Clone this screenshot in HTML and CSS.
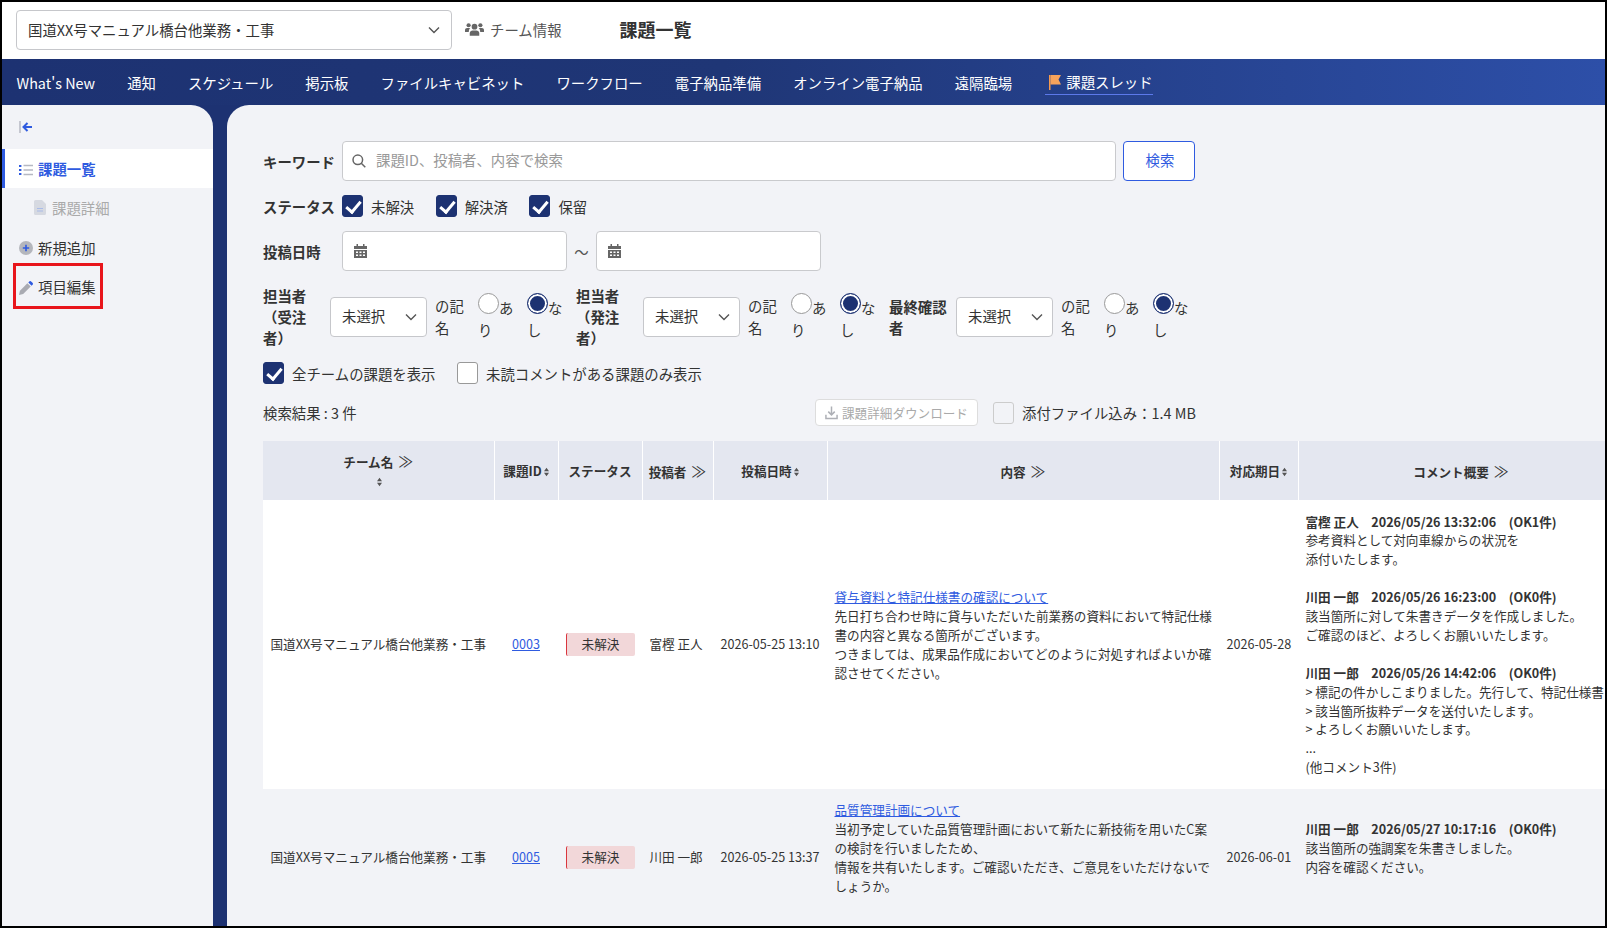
FILE: index.html
```html
<!DOCTYPE html>
<html lang="ja">
    <head>
        <meta charset="utf-8">
        <title>課題一覧</title>
        <link rel="stylesheet" href="styles.css">
    </head>
    <body>
        <div class="frame">
            <header class="top">
                <div class="select project-select">
                    <span>国道XX号マニュアル橋台他業務・工事</span>
                    <svg class="chevron" viewBox="0 0 12 8"><path d="M1 1.5l5 5 5-5"/></svg>
                </div>
                <a class="team-link">
                    <svg class="team-icon" viewBox="0 0 20 15"><circle cx="10" cy="4.5" r="3"/><circle cx="3.8" cy="3" r="2.2"/><circle cx="16.2" cy="3" r="2.2"/><path d="M5 14v-2.5C5 9.500 6.500 8.500 8 8.500h4c1.500 0 3 1 3 3V14z"/><path d="M0 10V8c0-1.500 1-2.200 2.200-2.200h3.300C4.500 6.800 4 8 4 10zM20 10V8c0-1.500-1-2.200-2.200-2.200h-3.300c1 1 1.500 2.200 1.500 4.200z"/></svg>
                    チーム情報
                </a>
                <h1 class="page-title">課題一覧</h1>
            </header>

            <nav class="nav">
                <a>What's New</a>
                <a>通知</a>
                <a>スケジュール</a>
                <a>掲示板</a>
                <a>ファイルキャビネット</a>
                <a>ワークフロー</a>
                <a>電子納品準備</a>
                <a>オンライン電子納品</a>
                <a>遠隔臨場</a>
                <a class="nav-active">
                    <svg class="flag" viewBox="0 0 12 15"><path d="M0 0h1.500v15H0z" fill="#f59a4f"/><path d="M1.500 0H12L9.500 4.500 12 9.500H1.500z" fill="#f7a35c"/></svg>
                    課題スレッド
                </a>
            </nav>

            <div class="body-wrap">
                <aside class="side">
                    <div class="collapse">
                        <svg viewBox="0 0 14 12" width="14" height="12"><path d="M1 0v12" stroke="#b9bcc6" stroke-width="1.600" fill="none"/><path d="M13 6H5M8.500 2L4.500 6l4 4" stroke="#2f5be0" stroke-width="2" fill="none"/></svg>
                    </div>
                    <a class="side-item active">
                        <svg class="side-icon" viewBox="0 0 14 12"><path d="M0 1h2.400v2H0zM0 5h2.400v2H0zM0 9h2.400v2H0z" fill="#2f5be0"/><path d="M4.500 1.500H14M4.500 6H14M4.500 10.500H14" stroke="#b5b8c2" stroke-width="1.300"/></svg>
                        課題一覧
                    </a>
                    <a class="side-item sub">
                        <svg class="doc-icon" viewBox="0 0 12 15"><path d="M1.500 0H8l4 4v9.500a1.500 1.500 0 0 1-1.500 1.500h-9A1.500 1.500 0 0 1 0 13.500v-12A1.500 1.500 0 0 1 1.500 0z" fill="#d6d9e1"/><path d="M3 8.500h6M3 11h6" stroke="#a9bbe8" stroke-width="1.200"/></svg>
                        課題詳細
                    </a>
                    <a class="side-item">
                        <svg class="side-icon" viewBox="0 0 14 14"><circle cx="7" cy="7" r="7" fill="#b4b6bc"/><path d="M7 3.800v6.400M3.800 7h6.400" stroke="#2f5be0" stroke-width="1.600"/></svg>
                        新規追加
                    </a>
                    <a class="side-item">
                        <svg class="side-icon" viewBox="0 0 15 15"><path d="M0 15l1-4.500L9 2.500l3.500 3.500-8 8z" fill="#a9abb2"/><path d="M10 1.500l1-1a1.400 1.400 0 0 1 2 0l1.500 1.500a1.400 1.400 0 0 1 0 2l-1 1z" fill="#2f5be0"/></svg>
                        項目編集
                        <span class="annot"></span>
                    </a>
                </aside>

                <main class="main">
                    <div class="row">
                        <label class="lbl">キーワード</label>
                        <div class="field keyword">
                            <svg class="search-icon" viewBox="0 0 14 14"><circle cx="5.800" cy="5.800" r="4.800"/><path d="M9.300 9.300l4 4"/></svg>
                            <input type="text" placeholder="課題ID、投稿者、内容で検索">
                        </div>
                        <button class="search-btn" type="button">検索</button>
                    </div>

                    <div class="row status-row">
                        <label class="lbl">ステータス</label>
                        <label class="chk"><input type="checkbox" checked>未解決</label>
                        <label class="chk"><input type="checkbox" checked>解決済</label>
                        <label class="chk"><input type="checkbox" checked>保留</label>
                    </div>

                    <div class="row date-row">
                        <label class="lbl">投稿日時</label>
                        <div class="field date">
                            <svg class="cal" viewBox="0 0 13 14"><path d="M2.500 0h1.500v2H9V0h1.500v2H13v3H0V2h2.500z"/><path d="M0 6h13v8H0zM2 7.500v1.500h2V7.500zM5.500 7.500v1.500h2V7.500zM9 7.500v1.500h2V7.500zM2 10.500V12h2v-1.500zM5.500 10.500V12h2v-1.500zM9 10.500V12h2v-1.500z" fill-rule="evenodd"/></svg>
                        </div>
                        <span class="tilde">〜</span>
                        <div class="field date">
                            <svg class="cal" viewBox="0 0 13 14"><path d="M2.500 0h1.500v2H9V0h1.500v2H13v3H0V2h2.500z"/><path d="M0 6h13v8H0zM2 7.500v1.500h2V7.500zM5.500 7.500v1.500h2V7.500zM9 7.500v1.500h2V7.500zM2 10.500V12h2v-1.500zM5.500 10.500V12h2v-1.500zM9 10.500V12h2v-1.500z" fill-rule="evenodd"/></svg>
                        </div>
                    </div>

                    <div class="row assign-row">
                        <div class="assign">
                            <label class="lbl assign-lbl"><span>担当者（受注者）</span></label>
                            <div class="select small-select"><span>未選択</span><svg class="chevron" viewBox="0 0 12 8"><path d="M1 1.500l5 5 5-5"/></svg></div>
                            <span class="sign">の記名</span>
                            <label class="rad"><input type="radio" name="a1">あり</label>
                            <label class="rad"><input type="radio" name="a1" checked>なし</label>
                        </div>
                        <div class="assign">
                            <label class="lbl assign-lbl"><span>担当者（発注者）</span></label>
                            <div class="select small-select"><span>未選択</span><svg class="chevron" viewBox="0 0 12 8"><path d="M1 1.500l5 5 5-5"/></svg></div>
                            <span class="sign">の記名</span>
                            <label class="rad"><input type="radio" name="a2">あり</label>
                            <label class="rad"><input type="radio" name="a2" checked>なし</label>
                        </div>
                        <div class="assign">
                            <label class="lbl assign-lbl wide"><span>最終確認者</span></label>
                            <div class="select small-select"><span>未選択</span><svg class="chevron" viewBox="0 0 12 8"><path d="M1 1.500l5 5 5-5"/></svg></div>
                            <span class="sign">の記名</span>
                            <label class="rad"><input type="radio" name="a3">あり</label>
                            <label class="rad"><input type="radio" name="a3" checked>なし</label>
                        </div>
                    </div>

                    <div class="row option-row">
                        <label class="chk"><input type="checkbox" checked>全チームの課題を表示</label>
                        <label class="chk"><input type="checkbox">未読コメントがある課題のみ表示</label>
                    </div>

                    <div class="row result-row">
                        <span class="count">検索結果 : 3 件</span>
                        <button class="dl-btn" type="button">
                            <svg viewBox="0 0 14 14" width="13" height="14"><path d="M7 0v8.500M3.500 5.500L7 9l3.500-3.500M1 9v4h12V9" stroke="#aeb0b6" stroke-width="1.600" fill="none"/></svg>
                            課題詳細ダウンロード
                        </button>
                        <label class="chk attach"><input type="checkbox" disabled>添付ファイル込み：1.4 MB</label>
                    </div>

                    <div class="table-wrap">
                        <table class="issues">
                            <thead>
                                <tr>
                                    <th class="c-team">チーム名 <span class="more">≫</span><br><svg class="sort" viewBox="0 0 6 10"><path d="M3 0l3 4H0zM3 10L0 6h6z"/></svg></th>
                                    <th class="c-id">課題ID<svg class="sort" viewBox="0 0 6 10"><path d="M3 0l3 4H0zM3 10L0 6h6z"/></svg></th>
                                    <th class="c-status">ステータス</th>
                                    <th class="c-user">投稿者 <span class="more">≫</span></th>
                                    <th class="c-date">投稿日時<svg class="sort" viewBox="0 0 6 10"><path d="M3 0l3 4H0zM3 10L0 6h6z"/></svg></th>
                                    <th class="c-body">内容 <span class="more">≫</span></th>
                                    <th class="c-due">対応期日<svg class="sort" viewBox="0 0 6 10"><path d="M3 0l3 4H0zM3 10L0 6h6z"/></svg></th>
                                    <th class="c-comment">コメント概要 <span class="more">≫</span></th>
                                </tr>
                            </thead>
                            <tbody>
                                <tr>
                                    <td>国道XX号マニュアル橋台他業務・工事</td>
                                    <td class="center"><a href="#">0003</a></td>
                                    <td class="center"><span class="badge">未解決</span></td>
                                    <td>富樫 正人</td>
                                    <td>2026-05-25 13:10</td>
                                    <td class="body-cell"><a href="#">貸与資料と特記仕様書の確認について</a><br>先日打ち合わせ時に貸与いただいた前業務の資料において特記仕様書の内容と異なる箇所がございます。<br>つきましては、成果品作成においてどのように対処すればよいか確認させてください。<br><br></td>
                                    <td class="nowrap">2026-05-28</td>
                                    <td class="nowrap"><b>富樫 正人　2026/05/26 13:32:06　(OK1件)</b><br>参考資料として対向車線からの状況を<br>添付いたします。<br><br><b>川田 一郎　2026/05/26 16:23:00　(OK0件)</b><br>該当箇所に対して朱書きデータを作成しました。<br>ご確認のほど、よろしくお願いいたします。<br><br><b>川田 一郎　2026/05/26 14:42:06　(OK0件)</b><br>&gt; 標記の件かしこまりました。先行して、特記仕様書<br>&gt; 該当箇所抜粋データを送付いたします。<br>&gt; よろしくお願いいたします。<br>...<br>(他コメント3件)</td>
                                </tr>
                                <tr>
                                    <td>国道XX号マニュアル橋台他業務・工事</td>
                                    <td class="center"><a href="#">0005</a></td>
                                    <td class="center"><span class="badge">未解決</span></td>
                                    <td>川田 一郎</td>
                                    <td>2026-05-25 13:37</td>
                                    <td class="body-cell"><a href="#">品質管理計画について</a><br>当初予定していた品質管理計画において新たに新技術を用いたC案の検討を行いましたため、<br>情報を共有いたします。ご確認いただき、ご意見をいただけないでしょうか。<br><br></td>
                                    <td class="nowrap">2026-06-01</td>
                                    <td class="nowrap"><b>川田 一郎　2026/05/27 10:17:16　(OK0件)</b><br>該当箇所の強調案を朱書きしました。<br>内容を確認ください。<br><br></td>
                                </tr>
                            </tbody>
                        </table>
                    </div>
                </main>
            </div>
        </div>
    </body>
</html>
```

FILE: styles.css
```css
html, body { margin: 0; padding: 0; height: 100%; }
body { font-family: "Noto Sans CJK JP", "Noto Sans", sans-serif; font-size: 14.4px; color: #333; background: #000; }

.frame { box-sizing: border-box; width: 1607px; height: 928px; border: 2px solid #000; display: flex; flex-direction: column; overflow: hidden; background: #fff; }

/* top bar */
.top { height: 57px; flex: none; display: flex; align-items: center; padding-left: 14px; padding-bottom: 1px; box-sizing: border-box; background: #fff; }
.select { box-sizing: border-box; display: flex; align-items: center; justify-content: space-between; background: #fff; border: 1px solid #c6c7cb; border-radius: 4px; height: 40px; color: #333; }
.select span { padding-bottom: 2px; }
.project-select { width: 436px; padding: 0 11px 0 11px; }
.chevron { width: 12px; height: 8px; fill: none; stroke: #555; stroke-width: 1.4; }
.team-link { display: flex; align-items: center; margin-left: 13px; padding-bottom: 2px; color: #555; }
.team-icon { width: 19px; height: 15px; fill: #666; margin-right: 6px; }
.page-title { margin: 0 0 2px 58px; font-size: 18px; font-weight: 700; color: #333; }

/* nav */
.nav { height: 46px; flex: none; display: flex; align-items: center; gap: 32px; padding-left: 14.5px; padding-top: 2px; box-sizing: border-box; background: linear-gradient(90deg, #1d3272 0%, #1f3676 45%, #2d4fa8 100%); color: #fff; }
.nav a { white-space: nowrap; line-height: 22px; }
.nav-active { display: flex; align-items: center; border-bottom: 1px solid #5c79ea; padding: 0 0 1px 4px; margin-left: 1px; }
.flag { width: 12px; height: 15px; margin-right: 5px; }

.body-wrap { flex: 1; min-height: 0; display: flex; background: #1d3272; gap: 14px; }

/* sidebar */
.side { width: 211px; flex: none; background: #f2f3f7; border-top-right-radius: 22px; padding-top: 44px; position: relative; box-sizing: border-box; }
.collapse { position: absolute; left: 17px; top: 16px; line-height: 0; }
.side-item { display: flex; align-items: center; height: 39.3px; padding-left: 17px; box-sizing: border-box; position: relative; color: #333; }
.side-item.active { background: #fff; border-left: 3px solid #2f5be0; padding-left: 14px; color: #2f5be0; font-weight: 700; }
.side-item.sub { color: #aaa; padding-left: 32px; }
.side-icon { width: 14px; height: 14px; margin: 2px 5px 0 0; flex: none; }
.doc-icon { width: 12px; height: 15px; margin-right: 6px; flex: none; }
.annot { position: absolute; left: 11px; top: -4px; width: 90px; height: 46px; box-sizing: border-box; border: 3.5px solid #e8151b; }

/* main */
.main { flex: 1; min-width: 0; background: #f2f3f7; border-top-left-radius: 22px; padding: 36px 0 0 36px; overflow: hidden; }
.row { display: flex; align-items: center; }
.lbl { width: 79px; flex: none; font-weight: 700; }
.field { box-sizing: border-box; background: #fff; border: 1px solid #c9cacd; border-radius: 4px; height: 40px; display: flex; align-items: center; }
.keyword { width: 774px; padding-left: 9px; }
.keyword input { border: none; outline: none; background: none; flex: 1; margin: 0 0 3px 10px; padding: 0; font: inherit; color: #333; }
.keyword input::placeholder { color: #999; }
.search-icon { width: 14px; height: 14px; fill: none; stroke: #666; stroke-width: 1.500; }
.search-btn { box-sizing: border-box; width: 72px; height: 40px; margin-left: 7px; padding: 0 0 3px 2px; background: #fff; border: 1px solid #2f5be0; border-radius: 4px; color: #2f5be0; font: inherit; }

.status-row { margin-top: 14px; height: 22px; }
.chk { display: flex; align-items: center; margin-right: 21.5px; white-space: nowrap; }
.chk input { appearance: none; box-sizing: border-box; width: 21px; height: 22px; margin: 0 8px 0 0; background: #fff; border: 1px solid #999; border-radius: 3px; position: relative; flex: none; }
.chk input:checked { background: #1d3272; border-color: #1d3272; }
.chk input:checked::after { content: ""; position: absolute; left: 6px; top: 2px; width: 6px; height: 12px; border: solid #fff; border-width: 0 3px 3px 0; transform: rotate(40deg); }
.chk input:disabled { background: #f2f3f7; border-color: #ccc; }

.date-row { margin-top: 14px; }
.date { width: 225px; padding-left: 11px; }
.cal { width: 13px; height: 14px; fill: #666; }
.tilde { width: 29px; text-align: center; color: #555; }

.assign-row { margin-top: 14px; }
.assign { display: flex; align-items: center; width: 313px; flex: none; }
.assign-lbl { width: 67px; line-height: 21px; }
.assign-lbl span { display: block; width: 50px; }
.assign-lbl.wide span { width: 60px; }
.small-select { width: 97px; padding: 0 9px 0 11px; flex: none; }
.sign { width: 30px; margin: 0 13px 0 8px; line-height: 21.500px; flex: none; }
.rad { width: 49px; line-height: 21.500px; flex: none; }
.rad input { appearance: none; box-sizing: border-box; width: 21px; height: 21px; margin: 0; background: #fff; border: 1px solid #999; border-radius: 50%; }
.rad input:checked { background: #1d3272; border: 1px solid #1d3272; box-shadow: inset 0 0 0 2px #fff; }

.option-row { margin-top: 14px; }
.result-row { margin-top: 15px; height: 27px; }
.count { width: 552px; flex: none; }
.dl-btn { box-sizing: border-box; display: flex; align-items: center; gap: 4px; width: 163px; height: 27px; padding: 0 9px; background: #fff; border: 1px solid #ddd; border-radius: 4px; color: #aaa; font: inherit; font-size: 12.600px; white-space: nowrap; }
.attach { margin-left: 15px; }

/* table */
.table-wrap { margin-top: 15px; overflow: hidden; }
.issues { border-collapse: collapse; table-layout: fixed; width: 1361px; font-size: 12.600px; line-height: 18.900px; }
.issues th { background: #e4e7f0; height: 59px; padding: 2px 7px 0; border-right: 1px solid #fff; font-weight: 700; text-align: center; white-space: nowrap; box-sizing: border-box; }
.issues td { padding: 12.500px 7.500px 11.500px; vertical-align: middle; }
.issues td.body-cell { padding-right: 5.500px; }
.issues tbody tr:nth-child(odd) { background: #fff; }
.issues tbody tr:nth-child(even) { background: #f2f3f7; }
.issues a { color: #2f5be0; text-decoration: underline; }
.c-team { width: 231px; }
.c-id { width: 64px; }
.c-status { width: 84px; }
.c-user { width: 71px; }
.c-date { width: 114px; }
.c-body { width: 392px; }
.c-due { width: 79px; }
.c-comment { width: 326px; }
.issues th.c-id, .issues th.c-user, .issues th.c-date, .issues th.c-due { padding: 2px 2px 0; }
.more { font-weight: 400; font-size: 15px; margin-left: 2px; }
.sort { width: 5px; height: 10px; fill: #555; margin-left: 2px; vertical-align: -1px; }
.center { text-align: center; }
.badge { display: inline-block; box-sizing: border-box; width: 69px; height: 23px; line-height: 22px; background: #f2d7d9; border-left: 1px solid #d9363e; border-radius: 2px; text-align: center; }
.nowrap { white-space: nowrap; }
```
